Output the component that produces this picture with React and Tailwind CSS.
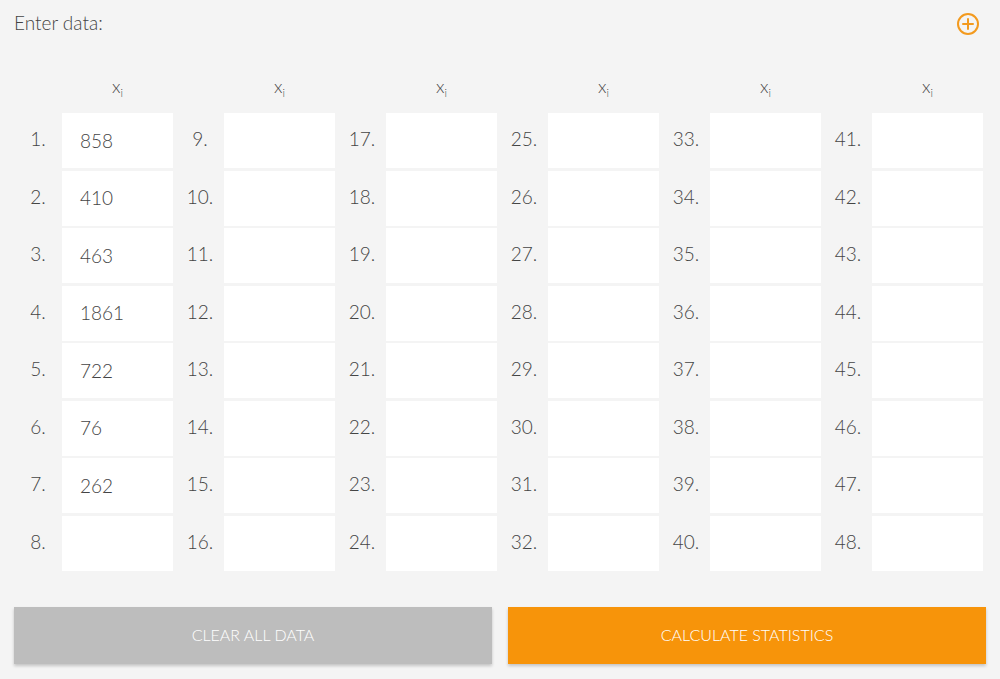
import React from "react";

const values = ["858", "410", "463", "1861", "722", "76", "262", ""];

export default function App() {
  const cols = [0, 1, 2, 3, 4, 5];
  const rows = [0, 1, 2, 3, 4, 5, 6, 7];
  return (
    <div
      className="w-[1000px] h-[679px] bg-[#f4f4f4] text-[#444444] overflow-hidden"
      style={{ fontFamily: "Lato, 'Open Sans', sans-serif" }}
    >
      <div className="flex items-center justify-between pl-[14px] pr-[20px] pt-[9px] h-[36px]">
        <span className="text-[19px] leading-none font-light">Enter data:</span>
        <svg width="24" height="24" viewBox="0 0 24 24" className="mt-[3px]">
          <circle cx="12" cy="12" r="10" fill="none" stroke="#f39a1e" strokeWidth="2" />
          <path d="M12 7v10M7 12h10" stroke="#f39a1e" strokeWidth="2" strokeLinecap="round" />
        </svg>
      </div>
      <div className="flex pl-[14px] mt-[40px]">
        {cols.map((c) => (
          <div key={c} className="w-[162px] flex flex-col">
            <div className="flex h-[24px] items-center">
              <div className="w-[48px]" />
              <div className="w-[111px] text-center text-[18px] leading-none font-light pb-[4px]">
                x<sub className="text-[11px] align-baseline relative top-[4px]">i</sub>
              </div>
            </div>
            <div className="flex flex-col gap-y-[2.5px] mt-[13px]">
              {rows.map((r) => {
                const n = c * 8 + r + 1;
                const v = c === 0 ? values[r] : "";
                return (
                  <div key={r} className="flex h-[55px] items-center font-light">
                    <div className="w-[48px] text-center text-[19px] pb-[2px]">{n}.</div>
                    <div className="w-[111px] h-full bg-white flex items-center pl-[18px] text-[19px] pt-[1px]">
                      {v}
                    </div>
                  </div>
                );
              })}
            </div>
          </div>
        ))}
      </div>
      <div className="flex gap-[16px] pl-[14px] mt-[36px]">
        <button className="w-[478px] h-[57px] bg-[#bdbdbd] text-white text-[16px] font-light uppercase shadow-[0_2px_3px_rgba(0,0,0,0.2)]">
          Clear all data
        </button>
        <button className="w-[478px] h-[57px] bg-[#f7940a] text-white text-[16px] font-light uppercase shadow-[0_2px_3px_rgba(0,0,0,0.2)]">
          Calculate statistics
        </button>
      </div>
    </div>
  );
}
